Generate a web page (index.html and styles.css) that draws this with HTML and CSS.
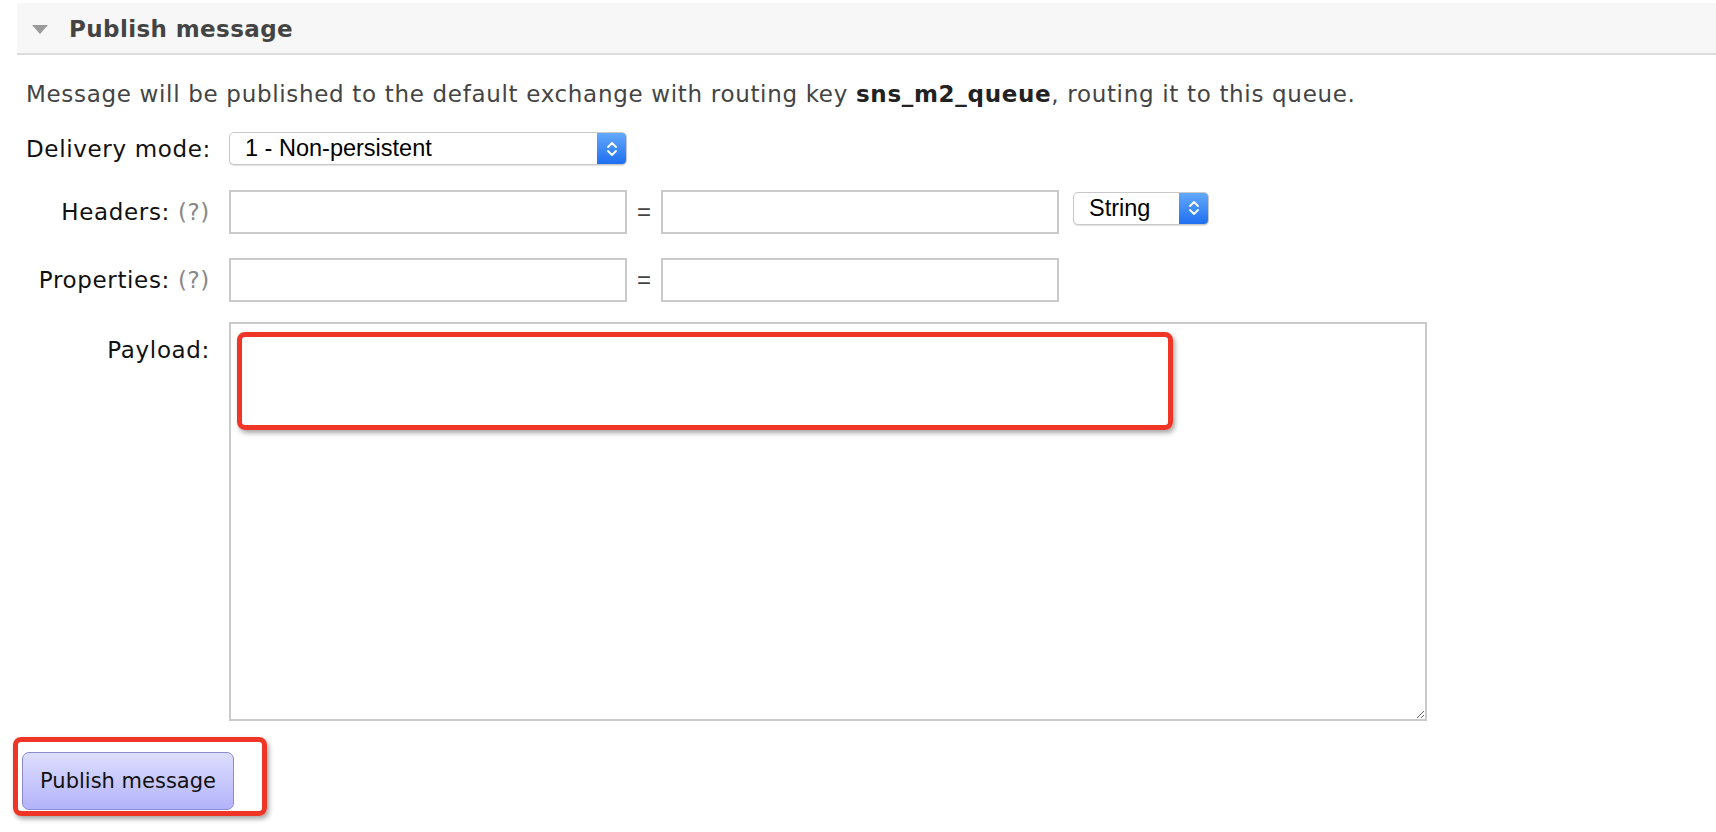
FILE: index.html
```html
<!DOCTYPE html>
<html>
<head>
<meta charset="utf-8">
<link rel="stylesheet" href="styles.css">
</head>
<body>
<div class="section">
  <div class="section-header">
    <span class="tri"></span>
    <h2 class="title">Publish message</h2>
  </div>
  <div class="content">
    <p class="desc">Message will be published to the default exchange with routing key <b>sns_m2_queue</b>, routing it to this queue.</p>

    <div class="row row-delivery">
      <label class="label">Delivery mode:</label>
      <div class="select select-wide">
        <span class="select-text">1 - Non-persistent</span>
        <span class="select-arrow"><svg width="14" height="20" viewBox="0 0 14 20"><path d="M3 8 L7 4 L11 8 M3 12 L7 16 L11 12" fill="none" stroke="#fff" stroke-width="1.8" stroke-linecap="round" stroke-linejoin="round"/></svg></span>
      </div>
    </div>

    <div class="row row-headers">
      <label class="label">Headers: <span class="help">(?)</span></label>
      <input class="field" type="text">
      <span class="eq">=</span>
      <input class="field" type="text">
      <div class="select select-small">
        <span class="select-text">String</span>
        <span class="select-arrow"><svg width="14" height="20" viewBox="0 0 14 20"><path d="M3 8 L7 4 L11 8 M3 12 L7 16 L11 12" fill="none" stroke="#fff" stroke-width="1.8" stroke-linecap="round" stroke-linejoin="round"/></svg></span>
      </div>
    </div>

    <div class="row row-props">
      <label class="label">Properties: <span class="help">(?)</span></label>
      <input class="field" type="text">
      <span class="eq">=</span>
      <input class="field" type="text">
    </div>

    <div class="row row-payload">
      <label class="label label-top">Payload:</label>
      <div class="payload-wrap">
        <textarea class="payload"></textarea>
        <div class="mark mark-payload"></div>
      </div>
    </div>

    <div class="btn-wrap">
      <button class="btn">Publish message</button>
      <div class="mark mark-btn"></div>
    </div>
  </div>
</div>
</body>
</html>
```
FILE: styles.css
```css
html, body {
  margin: 0;
  padding: 0;
  background: #fff;
}
body {
  font-family: "DejaVu Sans", Verdana, sans-serif;
  color: #111;
  width: 1716px;
  height: 832px;
  overflow: hidden;
}
.section {
  padding-top: 3px;
}
.section-header {
  margin-left: 17px;
  height: 50px;
  background: #f7f7f7;
  border-bottom: 2px solid #dcdcdc;
  display: flex;
  align-items: center;
  padding-left: 15px;
}
.tri {
  width: 0;
  height: 0;
  border-left: 8px solid transparent;
  border-right: 8px solid transparent;
  border-top: 9px solid #9a9a9a;
  margin-top: 2px;
}
.title {
  margin: 2px 0 0 21px;
  font-size: 23px;
  letter-spacing: 0.4px;
  font-weight: bold;
  color: #444;
}
.content {
  padding-left: 26px;
}
.desc {
  margin: 26px 0 0 0;
  font-size: 23px;
  letter-spacing: 0.68px;
  line-height: 26px;
  color: #444;
}
.desc b {
  color: #222;
}
.row {
  display: flex;
  align-items: center;
}
.label {
  width: 184px;
  margin-right: 19px;
  text-align: right;
  font-size: 23px;
  letter-spacing: 0.65px;
  line-height: 26px;
  color: #111;
  flex: none;
  white-space: nowrap;
}
.help {
  color: #888;
}
.row-delivery {
  margin-top: 25px;
}
.row-headers {
  margin-top: 25px;
}
.row-props {
  margin-top: 24px;
}
.row-payload {
  margin-top: 20px;
  align-items: flex-start;
}
.label-top {
  padding-top: 15px;
}
.field {
  box-sizing: border-box;
  width: 398px;
  height: 44px;
  border: 2px solid #cacaca;
  margin: 0;
  padding: 0 8px;
  font-size: 18px;
  background: #fff;
  outline: none;
}
.eq {
  width: 34px;
  text-align: center;
  font-family: "Liberation Sans", Arial, sans-serif;
  font-size: 24px;
  color: #444;
}
.select {
  box-sizing: border-box;
  height: 33px;
  border: 1px solid #c8c8c8;
  border-radius: 5px;
  background: #fff;
  box-shadow: 0 1px 1px rgba(0,0,0,0.12);
  display: flex;
  align-items: center;
  position: relative;
  overflow: hidden;
  font-family: "Liberation Sans", Arial, sans-serif;
  font-size: 23.5px;
  color: #000;
}
.select-wide {
  width: 398px;
}
.select-small {
  width: 136px;
  margin-left: 14px;
  margin-top: -8px;
}
.select-text {
  padding-left: 15px;
  flex: 1;
}
.select-arrow {
  width: 29px;
  align-self: stretch;
  background: linear-gradient(#63a9fb, #1f6ff0);
  display: flex;
  align-items: center;
  justify-content: center;
}
.payload-wrap {
  position: relative;
}
.payload {
  display: block;
  box-sizing: border-box;
  width: 1198px;
  height: 399px;
  border: 2px solid #cacaca;
  margin: 0;
  padding: 6px;
  resize: both;
  outline: none;
  font-size: 18px;
}
.mark {
  position: absolute;
  border: 5px solid #ee3526;
  border-radius: 8px;
  box-shadow: 2px 3px 5px rgba(0,0,0,0.35);
  box-sizing: border-box;
  pointer-events: none;
}
.mark-payload {
  left: 8px;
  top: 10px;
  width: 936px;
  height: 98px;
}
.btn-wrap {
  position: relative;
  margin-top: 31px;
  margin-left: -4px;
  width: 212px;
}
.btn {
  box-sizing: border-box;
  width: 212px;
  height: 58px;
  border: 1px solid #8a8ad0;
  border-radius: 7px;
  background: linear-gradient(#dedeff, #b3b3fa);
  font-family: "DejaVu Sans", Verdana, sans-serif;
  font-size: 21px;
  color: #111;
  padding: 0;
  margin: 0;
}
.mark-btn {
  left: -9px;
  top: -15px;
  width: 254px;
  height: 79px;
}
```
